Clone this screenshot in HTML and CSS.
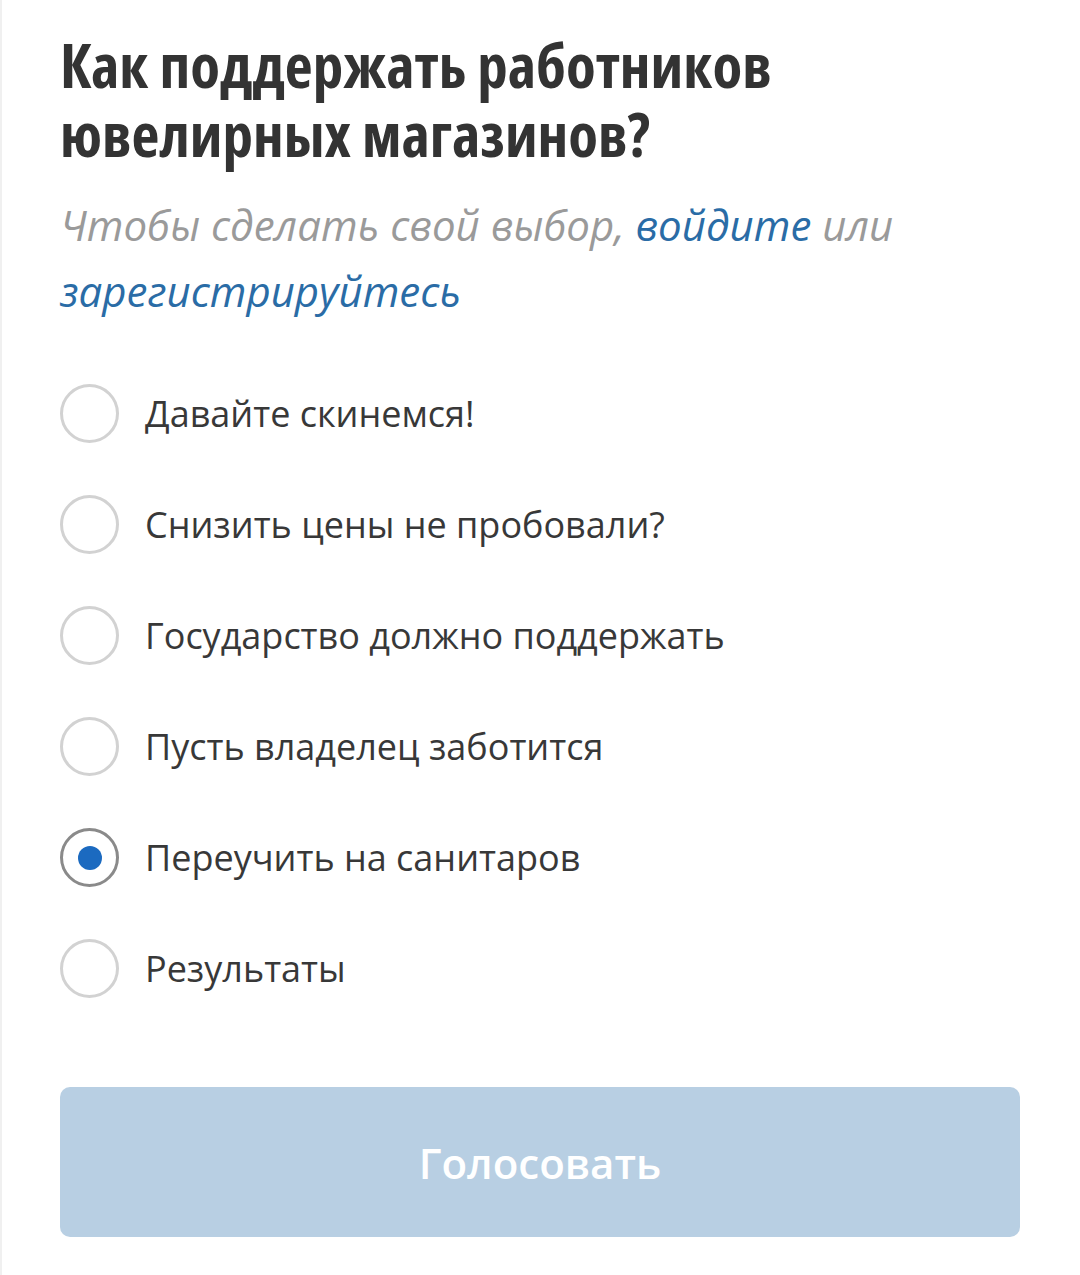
FILE: index.html
```html
<!DOCTYPE html>
<html lang="ru">
<head>
<meta charset="utf-8">
<link rel="stylesheet" href="styles.css">
</head>
<body>
<div class="poll">
  <h1 class="title">Как поддержать работников ювелирных магазинов?</h1>
  <p class="note">Чтобы сделать свой выбор, <a class="link strong" href="#">войдите</a> или <a class="link" href="#">зарегистрируйтесь</a></p>
  <ul class="options">
    <li class="option"><span class="radio"></span><span class="label">Давайте скинемся!</span></li>
    <li class="option"><span class="radio"></span><span class="label">Снизить цены не пробовали?</span></li>
    <li class="option"><span class="radio"></span><span class="label">Государство должно поддержать</span></li>
    <li class="option"><span class="radio"></span><span class="label">Пусть владелец заботится</span></li>
    <li class="option"><span class="radio checked"></span><span class="label">Переучить на санитаров</span></li>
    <li class="option"><span class="radio"></span><span class="label">Результаты</span></li>
  </ul>
  <button class="vote" type="button">Голосовать</button>
</div>
</body>
</html>
```
FILE: styles.css
```css
html, body {
  margin: 0;
  padding: 0;
  background: #ffffff;
}
body {
  font-family: "Open Sans", "Noto Sans", sans-serif;
  width: 1080px;
  height: 1275px;
  overflow: hidden;
  box-shadow: inset 2px 0 0 #f0f0f0;
}
.poll {
  padding: 30px 60px 0 60px;
}
.title {
  margin: 0;
  font-weight: 700;
  font-stretch: 77%;
  font-size: 61px;
  line-height: 69px;
  color: #333333;
}
.note {
  margin: 24px 0 0 0;
  font-style: italic;
  font-weight: 400;
  font-size: 42px;
  line-height: 66px;
  color: #9a9a9a;
}
.link {
  color: #2a6ca6;
  text-decoration: none;
}
.link.strong {
  font-weight: 500;
}
.options {
  list-style: none;
  margin: 60px 0 0 0;
  padding: 0;
  display: flex;
  flex-direction: column;
  gap: 52px;
}
.option {
  display: flex;
  align-items: center;
  gap: 26px;
  height: 59px;
}
.radio {
  width: 59px;
  height: 59px;
  box-sizing: border-box;
  border: 3px solid #d2d2d2;
  border-radius: 50%;
  display: flex;
  align-items: center;
  justify-content: center;
  flex: none;
}
.radio.checked {
  border-color: #8a8a8a;
}
.radio.checked::after {
  content: "";
  width: 24px;
  height: 24px;
  border-radius: 50%;
  background: #1b6ac0;
}
.label {
  font-size: 36px;
  color: #383838;
  line-height: 1;
}
.vote {
  display: block;
  margin-top: 89px;
  width: 960px;
  height: 150px;
  border: none;
  border-radius: 10px;
  background: #b8cfe3;
  color: #ffffff;
  font-family: "Open Sans", "Noto Sans", sans-serif;
  font-weight: 600;
  font-size: 42px;
  padding: 0;
}
```
